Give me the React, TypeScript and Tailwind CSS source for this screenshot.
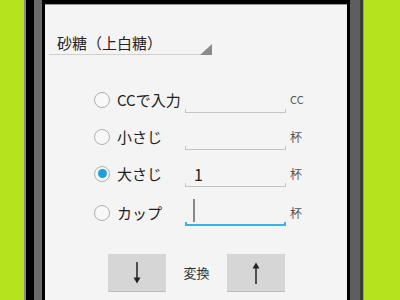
import React from "react";

const jp = { fontFamily: '"Noto Sans CJK JP", "Noto Sans", sans-serif' };

function Radio({ checked }: { checked?: boolean }) {
  return (
    <div className="w-[16px] h-[16px] rounded-full border border-[#b0b0b0] bg-[#f8f8f8] flex items-center justify-center shrink-0">
      {checked && <div className="w-[9px] h-[9px] rounded-full bg-[#1f9fd8]" />}
    </div>
  );
}

function Field({ value, focused, cursor }: { value?: string; focused?: boolean; cursor?: boolean }) {
  const line = focused ? "bg-[#33b5e5]" : "bg-[#c4c4c4]";
  return (
    <div className="relative w-[101px] h-[26px] shrink-0">
      {value && (
        <span className="absolute left-[9px] top-[2px] text-[16px] leading-[22px] text-[#222]" style={jp}>
          {value}
        </span>
      )}
      {cursor && <div className="absolute left-[8px] top-[-1px] w-[2px] h-[23px] bg-[#888]" />}
      <div className={`absolute left-0 right-0 bottom-0 ${focused ? "h-[2px]" : "h-[1px]"} ${line}`} />
      <div className={`absolute left-0 bottom-0 ${focused ? "w-[2px]" : "w-[1px]"} h-[4px] ${line}`} />
      <div className={`absolute right-0 bottom-0 ${focused ? "w-[2px]" : "w-[1px]"} h-[4px] ${line}`} />
    </div>
  );
}

function Row({ label, unit, checked, value, focused, cursor, unitSmall }: { label: string; unit: string; checked?: boolean; value?: string; focused?: boolean; cursor?: boolean; unitSmall?: boolean }) {
  return (
    <div className="flex items-center h-[37px]">
      <Radio checked={checked} />
      <span className="ml-[7px] w-[68px] text-[15px] leading-[20px] text-[#222]" style={jp}>
        {label}
      </span>
      <Field value={value} focused={focused} cursor={cursor} />
      <span className={`ml-[4px] ${unitSmall ? "text-[11px]" : "text-[12px]"} text-[#555]`} style={jp}>
        {unit}
      </span>
    </div>
  );
}

function Arrow({ up }: { up?: boolean }) {
  return (
    <svg width="10" height="22" viewBox="0 0 10 22" className={up ? "rotate-180" : ""}>
      <line x1="5" y1="0" x2="5" y2="19" stroke="#222" strokeWidth="1.5" />
      <polygon points="1.5,15.5 8.5,15.5 5,21.5" fill="#222" />
    </svg>
  );
}

export default function App() {
  return (
    <div className="flex w-[400px] h-[300px] overflow-hidden">
      <div className="w-[24px] bg-[#b5e31e]" />
      <div className="w-[2px] bg-[#8a8a8a]" />
      <div className="w-[8px] bg-black" />
      <div className="w-[8px] bg-[#6a6a6a]" />
      <div className="w-[3px] bg-black" />
      <div className="w-[302px] flex flex-col bg-[#f4f4f4]">
        <div className="h-[4px] bg-black shrink-0" />
        <div className="h-[1px] bg-[#9a9a9a] shrink-0" />
        <div className="mt-[28px] ml-[4px] w-[163px] relative h-[22px]">
          <span className="absolute left-[8px] top-0 text-[15px] leading-[20px] text-[#222]" style={jp}>
            砂糖（上白糖）
          </span>
          <div className="absolute left-0 right-0 bottom-0 h-[1px] bg-[#cfcfcf]" />
          <svg className="absolute right-0 bottom-0" width="12" height="11" viewBox="0 0 12 11">
            <polygon points="12,0 12,11 0,11" fill="#8a8a8a" />
          </svg>
        </div>
        <div className="mt-[26px] ml-[49px] flex flex-col">
          <Row label="CCで入力" unit="CC" unitSmall />
          <Row label="小さじ" unit="杯" />
          <Row label="大さじ" unit="杯" checked value="1" />
          <div className="mt-[2px]">
            <Row label="カップ" unit="杯" focused cursor />
          </div>
        </div>
        <div className="mt-[23px] ml-[63px] flex items-center">
          <div className="w-[58px] h-[38px] bg-[#d6d6d6] border-b border-[#bdbdbd] flex items-center justify-center">
            <Arrow />
          </div>
          <span className="w-[61px] text-center text-[13px] text-[#333]" style={jp}>
            変換
          </span>
          <div className="w-[58px] h-[38px] bg-[#d6d6d6] border-b border-[#bdbdbd] flex items-center justify-center">
            <Arrow up />
          </div>
        </div>
      </div>
      <div className="w-[3px] bg-black" />
      <div className="w-[10px] bg-[#5e5e5e]" />
      <div className="w-[3px] bg-[#3c3c3c]" />
      <div className="w-[1px] bg-[#9a9a9a]" />
      <div className="flex-1 bg-[#b5e31e]" />
    </div>
  );
}
